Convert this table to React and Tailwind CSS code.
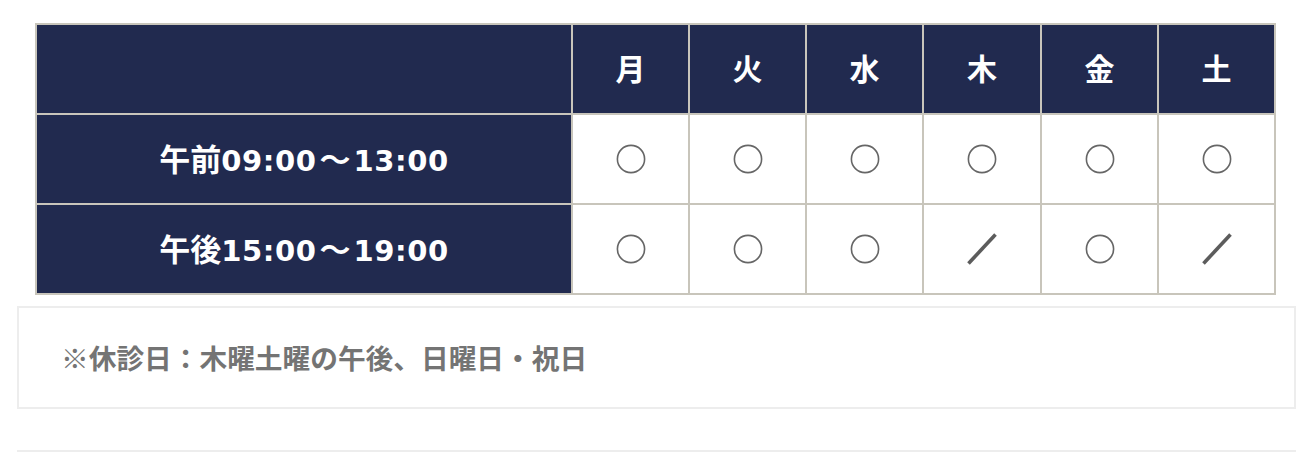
const days = ["月", "火", "水", "木", "金", "土"];

const rows = [
  { label: ["午前", "09:00", "13:00"], marks: ["o", "o", "o", "o", "o", "o"] },
  { label: ["午後", "15:00", "19:00"], marks: ["o", "o", "o", "x", "o", "x"] },
];

const Circle = () => (
  <svg width="30" height="30" viewBox="0 0 30 30">
    <circle cx="15" cy="15" r="13.6" fill="none" stroke="#666" strokeWidth="1.6" />
  </svg>
);

const Slash = () => (
  <svg width="30" height="32" viewBox="0 0 30 32">
    <line x1="1.5" y1="30.5" x2="28.5" y2="1.5" stroke="#5c5c5c" strokeWidth="3.6" />
  </svg>
);

const App = () => {
  return (
    <div
      className="w-[1308px] h-[452px] overflow-hidden bg-white pt-[23px] pl-[17px]"
      style={{ fontFamily: '"Noto Sans CJK JP", "Noto Sans", sans-serif' }}
    >
      <div className="ml-[18px] w-[1241px] grid grid-cols-[534px_115px_115px_115px_116px_115px_115px] gap-[2px] p-[2px] bg-[#c8c5bb]">
        <div className="h-[88px] bg-[#212a4f]"></div>
        {days.map((d) => (
          <div
            key={d}
            className="h-[88px] pb-[5px] bg-[#212a4f] flex items-center justify-center text-white font-bold text-[30px] leading-none"
          >
            {d}
          </div>
        ))}
        {rows.map((row) => (
          <>
            <div
              key={row.label[0]}
              className="h-[88px] bg-[#212a4f] flex items-center justify-center text-white font-bold"
            >
              <span className="whitespace-nowrap">
                <span className="text-[31px]">{row.label[0]}</span>
                <span className="font-['DejaVu_Sans'] text-[29px] tracking-[0.6px]">{row.label[1]}</span>
                <span className="text-[31px] mx-[3px]">〜</span>
                <span className="font-['DejaVu_Sans'] text-[29px] tracking-[0.6px]">{row.label[2]}</span>
              </span>
            </div>
            {row.marks.map((m, i) => (
              <div key={row.label[0] + i} className="h-[88px] bg-white flex items-center justify-center">
                {m === "o" ? <Circle /> : <Slash />}
              </div>
            ))}
          </>
        ))}
      </div>

      <div className="mt-[11px] w-[1279px] h-[103px] border-2 border-[#ededed] flex items-center pl-[42px]">
        <p className="text-[27.7px] font-bold text-[#747474]">※休診日：木曜土曜の午後、日曜日・祝日</p>
      </div>

      <div className="mt-[41px] w-[1279px] h-[20px] border-t-2 border-x-2 border-[#ededed]"></div>
    </div>
  );
};

export default App;
